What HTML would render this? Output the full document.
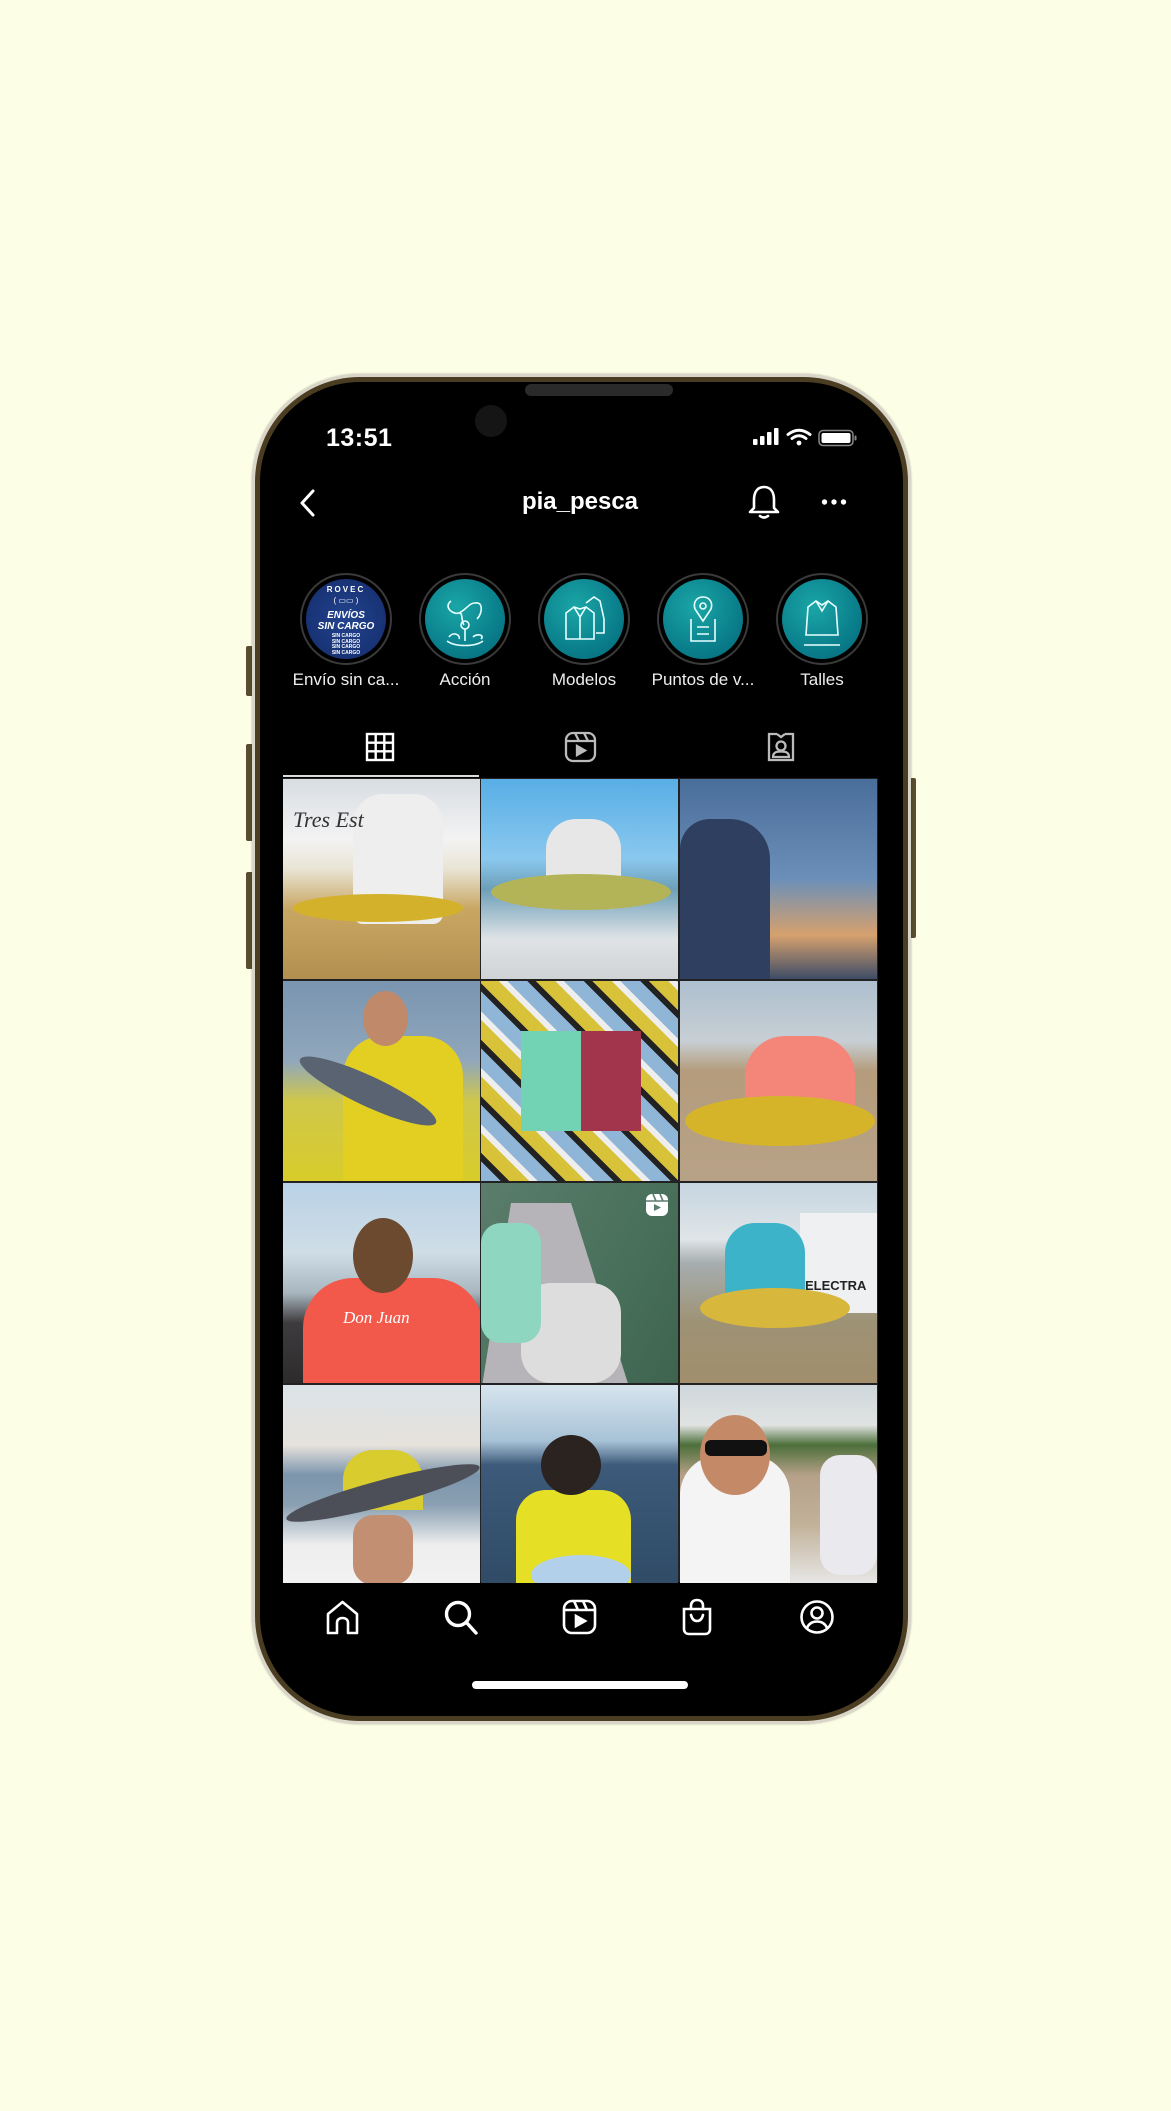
<!DOCTYPE html>
<html><head><meta charset="utf-8"><style>
*{margin:0;padding:0;box-sizing:border-box}
html,body{width:1171px;height:2111px;background:#fdfee6;overflow:hidden;font-family:"Liberation Sans",Arial,sans-serif}
.abs{position:absolute}
.frame{left:252px;top:374px;width:659px;height:1350px;border-radius:108px;background:#d9d5c9;box-shadow:0 0 2px rgba(0,0,0,.3)}
.band{left:255px;top:377px;width:653px;height:1344px;border-radius:105px;background:#4a3d22}
.screen{left:260px;top:382px;width:643px;height:1334px;border-radius:100px;background:#000;overflow:hidden}
.btn{background:#5a4c2e;border-radius:2px}
.t{color:#fff;position:absolute}
.hl{position:absolute;top:573px;width:92px;height:92px;border-radius:50%;border:2px solid #3a3a3a;background:#000}
.hl .in{position:absolute;left:4px;top:4px;width:80px;height:80px;border-radius:50%;background:radial-gradient(circle at 40% 35%,#1aa6a6,#0a7f8c 60%,#066676);overflow:hidden}
.lab{position:absolute;top:670px;width:120px;text-align:center;color:#eee;font-size:17px}
.cell{position:absolute;width:197px;height:200px;overflow:hidden}
</style></head><body>
<div class="abs btn" style="left:246px;top:646px;width:7px;height:50px"></div>
<div class="abs btn" style="left:246px;top:744px;width:7px;height:97px"></div>
<div class="abs btn" style="left:246px;top:872px;width:7px;height:97px"></div>
<div class="abs btn" style="left:910px;top:778px;width:6px;height:160px"></div>
<div class="abs frame"></div>
<div class="abs band"></div>
<div class="abs screen"></div>
<div class="abs" style="left:525px;top:384px;width:148px;height:12px;border-radius:6px;background:#2a2a2a"></div>
<div class="abs" style="left:475px;top:405px;width:32px;height:32px;border-radius:50%;background:#151515"></div>

<div class="t" style="left:326px;top:424px;font-size:25px;font-weight:bold;letter-spacing:0.5px">13:51</div>
<svg class="abs" style="left:752px;top:426px" width="106" height="22" viewBox="0 0 106 22">
<rect x="1" y="13" width="4.5" height="6" rx="1" fill="#fff"/><rect x="8" y="10" width="4.5" height="9" rx="1" fill="#fff"/><rect x="15" y="6" width="4.5" height="13" rx="1" fill="#fff"/><rect x="22" y="2" width="4.5" height="17" rx="1" fill="#fff"/>
<path d="M36 8.5 Q47 0 58 8.5" stroke="#fff" stroke-width="3" fill="none" stroke-linecap="round"/><path d="M40 12.5 Q47 7 54 12.5" stroke="#fff" stroke-width="3" fill="none" stroke-linecap="round"/><circle cx="47" cy="17" r="2.4" fill="#fff"/>
<rect x="67" y="4.5" width="34" height="15" rx="4" fill="none" stroke="#888" stroke-width="1.5"/><rect x="69.5" y="7" width="29" height="10" rx="2" fill="#fff"/><rect x="102.5" y="9.5" width="2" height="5" rx="1" fill="#888"/>
</svg>

<svg class="abs" style="left:296px;top:488px" width="24" height="30"><path d="M17 3 L6 15 L17 27" stroke="#fff" stroke-width="3" fill="none" stroke-linecap="round" stroke-linejoin="round"/></svg>
<div class="t" style="left:480px;top:488px;width:200px;text-align:center;font-size:24px;font-weight:bold">pia_pesca</div>
<svg class="abs" style="left:748px;top:484px" width="32" height="36" viewBox="0 0 32 36"><path d="M16 3 C8 3 6 10 6 16 L6 24 L2 28 L30 28 L26 24 L26 16 C26 10 24 3 16 3 Z" stroke="#fff" stroke-width="2.6" fill="none" stroke-linejoin="round"/><path d="M12 32 Q16 35 20 32" stroke="#fff" stroke-width="2.6" fill="none" stroke-linecap="round"/></svg>
<svg class="abs" style="left:821px;top:497px" width="26" height="10"><circle cx="3.5" cy="5" r="2.7" fill="#fff"/><circle cx="13" cy="5" r="2.7" fill="#fff"/><circle cx="22.5" cy="5" r="2.7" fill="#fff"/></svg>

<div class="hl" style="left:300px"><div class="in" style="background:radial-gradient(circle at 50% 50%,#22438e,#142c6a)">
<div style="position:absolute;top:6px;width:80px;text-align:center;color:#fff;font-size:8px;font-weight:bold;letter-spacing:2px">ROVEC</div>
<div style="position:absolute;top:17px;width:80px;text-align:center;color:#fff;font-size:8px">( ▭▭ )</div>
<div style="position:absolute;top:31px;width:80px;text-align:center;color:#fff;font-size:10px;font-weight:bold;font-style:italic;line-height:11px">ENVÍOS<br>SIN CARGO</div>
<div style="position:absolute;top:55px;width:80px;text-align:center;color:#fff;font-size:5px;font-weight:bold;line-height:5.5px">SIN CARGO<br>SIN CARGO<br>SIN CARGO<br>SIN CARGO</div>
</div></div>
<div class="hl" style="left:419px"><div class="in"><svg width="80" height="80" viewBox="0 0 80 80" fill="none" stroke="#e8ffff" stroke-width="1.6"><path d="M26 22 C18 28 28 36 34 34 C38 33 36 42 39 46 M34 34 C42 30 44 24 50 24 C58 22 58 34 52 40"/><circle cx="40" cy="46" r="4"/><path d="M40 50 L40 62"/><path d="M24 58 C28 52 36 56 34 60 M22 62 C30 68 50 68 58 62 M48 58 C52 54 60 56 56 60"/></svg></div></div>
<div class="hl" style="left:538px"><div class="in"><svg width="80" height="80" viewBox="0 0 80 80" fill="none" stroke="#e8ffff" stroke-width="1.6"><path d="M22 34 L30 28 L36 30 L42 28 L50 34 L50 60 L22 60 Z"/><path d="M30 28 L36 38 L42 28 M36 38 L36 60"/><path d="M42 24 L50 18 L56 22 L60 40 L60 54 L52 54"/></svg></div></div>
<div class="hl" style="left:657px"><div class="in"><svg width="80" height="80" viewBox="0 0 80 80" fill="none" stroke="#e8ffff" stroke-width="1.6"><path d="M40 18 C33 18 30 24 32 30 L40 42 L48 30 C50 24 47 18 40 18 Z"/><circle cx="40" cy="27" r="3"/><path d="M28 40 L28 62 L52 62 L52 40 M34 48 L46 48 M34 55 L46 55"/></svg></div></div>
<div class="hl" style="left:776px"><div class="in"><svg width="80" height="80" viewBox="0 0 80 80" fill="none" stroke="#e8ffff" stroke-width="1.6"><path d="M26 28 L34 22 L40 26 L46 22 L54 28 L56 56 L24 56 Z"/><path d="M34 22 L40 32 L46 22"/><path d="M22 66 L58 66"/></svg></div></div>
<div class="lab" style="left:286px">Envío sin ca...</div>
<div class="lab" style="left:405px">Acción</div>
<div class="lab" style="left:524px">Modelos</div>
<div class="lab" style="left:643px">Puntos de v...</div>
<div class="lab" style="left:762px">Talles</div>

<svg class="abs" style="left:365px;top:732px" width="30" height="30" viewBox="0 0 30 30" fill="none" stroke="#fff" stroke-width="2.4"><rect x="2" y="2" width="26" height="26"/><path d="M10.7 2V28M19.3 2V28M2 10.7H28M2 19.3H28"/></svg>
<svg class="abs" style="left:564px;top:731px" width="33" height="32" viewBox="0 0 33 32" fill="none" stroke="#bbb" stroke-width="2.3"><rect x="2" y="2" width="29" height="28" rx="7"/><path d="M2 10H31M11 2L15 10M20 2L24 10"/><path d="M13 15L21 19.5L13 24Z" fill="#bbb"/></svg>
<svg class="abs" style="left:765px;top:731px" width="32" height="32" viewBox="0 0 32 32" fill="none" stroke="#bbb" stroke-width="2.3"><path d="M12 3H4V29H28V3H20"/><path d="M12 3L16 6L20 3"/><circle cx="16" cy="15" r="4.5"/><path d="M8 26C8 21 12 20.5 16 20.5S24 21 24 26Z"/></svg>
<div class="abs" style="left:283px;top:775px;width:196px;height:2px;background:#ddd"></div>

<div class="abs" style="left:283px;top:778px;width:595px;height:804px;background:#222"></div>
<div class="cell" style="left:283px;top:779px;background:linear-gradient(180deg,#d8dde2 0%,#f3f3f3 30%,#e9e4d5 45%,#c9a763 65%,#b28f4e 100%)"><div class="abs" style="left:70px;top:15px;width:90px;height:130px;background:#eee;border-radius:30px 30px 10px 10px"></div><div class="abs" style="left:10px;top:115px;width:170px;height:28px;background:#d4b12a;border-radius:50%"></div><div class="t" style="left:10px;top:28px;color:#333;font-style:italic;font-family:'Liberation Serif';font-size:22px">Tres Est</div></div>
<div class="cell" style="left:481px;top:779px;background:linear-gradient(180deg,#58aee6 0%,#8ac8ee 40%,#6d9fb8 55%,#dfe3e6 80%,#cfd3d6 100%)"><div class="abs" style="left:65px;top:40px;width:75px;height:90px;background:#e7e7e7;border-radius:30px 30px 10px 10px"></div><div class="abs" style="left:10px;top:95px;width:180px;height:36px;background:#b3b458;border-radius:50%"></div></div>
<div class="cell" style="left:680px;top:779px;background:linear-gradient(180deg,#4a6e9a 0%,#6b8fb8 50%,#d6a16e 78%,#3d4c66 100%)"><div class="abs" style="left:0;top:40px;width:90px;height:160px;background:#2f3f60;border-radius:30px 40px 0 0"></div></div>
<div class="cell" style="left:283px;top:981px;background:linear-gradient(180deg,#7a95b0 0%,#90a7bc 40%,#cfc84a 60%,#d8cc2a 100%)"><div class="abs" style="left:60px;top:55px;width:120px;height:145px;background:#e3cf22;border-radius:40px 40px 0 0"></div><div class="abs" style="left:80px;top:10px;width:45px;height:55px;background:#c08a6a;border-radius:50%"></div><div class="abs" style="left:10px;top:95px;width:150px;height:30px;background:#596372;border-radius:50%;transform:rotate(25deg)"></div></div>
<div class="cell" style="left:481px;top:981px;background:repeating-linear-gradient(45deg,#8fb6d6 0 14px,#222 14px 20px,#d7c23a 20px 34px,#eee 34px 40px)"><div class="abs" style="left:40px;top:50px;width:60px;height:100px;background:#72d2b4"></div><div class="abs" style="left:100px;top:50px;width:60px;height:100px;background:#a2344c"></div></div>
<div class="cell" style="left:680px;top:981px;background:linear-gradient(180deg,#aebfcf 0%,#c7cfd4 30%,#b49c7c 45%,#b8a287 100%)"><div class="abs" style="left:65px;top:55px;width:110px;height:90px;background:#f38679;border-radius:40px 40px 10px 10px"></div><div class="abs" style="left:5px;top:115px;width:190px;height:50px;background:#d6b42a;border-radius:50%"></div></div>
<div class="cell" style="left:283px;top:1183px;background:linear-gradient(180deg,#b9d2e6 0%,#cfdde6 35%,#a8b6bf 55%,#3d3b3d 70%,#2d2b2c 100%)"><div class="abs" style="left:20px;top:95px;width:180px;height:110px;background:#f2594a;border-radius:50px 50px 0 0"></div><div class="abs" style="left:70px;top:35px;width:60px;height:75px;background:#6b4a30;border-radius:50%"></div><div class="t" style="left:60px;top:125px;font-style:italic;font-family:'Liberation Serif';font-size:17px">Don Juan</div></div>
<div class="cell" style="left:481px;top:1183px;background:linear-gradient(120deg,#5b7d6c 0%,#48705a 60%,#3e6450 100%)"><div class="abs" style="left:0;top:20px;width:150px;height:190px;background:#b6b4b8;clip-path:polygon(20% 0,60% 0,100% 100%,0 100%)"></div><div class="abs" style="left:40px;top:100px;width:100px;height:100px;background:#ddd;border-radius:30px"></div><div class="abs" style="left:0;top:40px;width:60px;height:120px;background:#8fd6c0;border-radius:20px"></div><svg class="abs" style="left:164px;top:10px" width="24" height="24" viewBox="0 0 24 24"><rect x="1" y="1" width="22" height="22" rx="6" fill="#fff"/><path d="M1 8H23M8 1L11 8M15 1L18 8" stroke="#5b7d6c" stroke-width="1.6"/><path d="M9 11L16 14.5L9 18Z" fill="#5b7d6c"/></svg></div>
<div class="cell" style="left:680px;top:1183px;background:linear-gradient(180deg,#c6d5e0 0%,#dfe5e8 28%,#a6aeaf 40%,#9e9275 70%,#a08e6c 100%)"><div class="abs" style="left:120px;top:30px;width:77px;height:100px;background:#eef0f2"></div><div class="abs" style="left:45px;top:40px;width:80px;height:80px;background:#3db3c9;border-radius:30px 30px 10px 10px"></div><div class="abs" style="left:20px;top:105px;width:150px;height:40px;background:#d8b83c;border-radius:50%"></div><div class="t" style="left:125px;top:95px;color:#222;font-size:13px;font-weight:bold">ELECTRA</div></div>
<div class="cell" style="left:283px;top:1385px;background:linear-gradient(180deg,#dbe3e8 0%,#e6e2dc 30%,#7c95ac 45%,#8aa0b2 60%,#eeeeee 80%,#f2f2f2 100%)"><div class="abs" style="left:60px;top:65px;width:80px;height:60px;background:#d8cc2e;border-radius:30px 30px 0 0"></div><div class="abs" style="left:0;top:95px;width:200px;height:26px;background:#4c4f58;border-radius:50%;transform:rotate(-15deg)"></div><div class="abs" style="left:70px;top:130px;width:60px;height:70px;background:#c28f73;border-radius:20px"></div></div>
<div class="cell" style="left:481px;top:1385px;background:linear-gradient(180deg,#d7e5ee 0%,#a7c2d6 28%,#3d5a7a 40%,#2f4b66 100%)"><div class="abs" style="left:35px;top:105px;width:115px;height:95px;background:#e5df26;border-radius:30px 30px 0 0"></div><div class="abs" style="left:60px;top:50px;width:60px;height:60px;background:#2a2320;border-radius:50%"></div><div class="abs" style="left:50px;top:170px;width:100px;height:40px;background:#b3d0ea;border-radius:50%"></div></div>
<div class="cell" style="left:680px;top:1385px;background:linear-gradient(180deg,#cfd7dc 0%,#e0e3e2 20%,#4c6f3a 30%,#b5a088 45%,#c2b29a 70%,#e8e8e8 100%)"><div class="abs" style="left:0;top:70px;width:110px;height:130px;background:#f4f4f4;border-radius:40px 40px 0 0"></div><div class="abs" style="left:20px;top:30px;width:70px;height:80px;background:#c48a67;border-radius:50%"></div><div class="abs" style="left:25px;top:55px;width:62px;height:16px;background:#111;border-radius:6px"></div><div class="abs" style="left:140px;top:70px;width:57px;height:120px;background:#e9e9ee;border-radius:20px"></div></div>

<div class="abs" style="left:260px;top:1583px;width:643px;height:20px;background:#000"></div>
<svg class="abs" style="left:325px;top:1600px" width="35" height="36" viewBox="0 0 35 36" fill="none" stroke="#fff" stroke-width="2.6" stroke-linejoin="round"><path d="M3 33V14L17.5 2L32 14V33H23V23C23 20 21 18 17.5 18S12 20 12 23V33Z"/></svg>
<svg class="abs" style="left:443px;top:1599px" width="36" height="38" viewBox="0 0 36 38" fill="none" stroke="#fff" stroke-width="3.4" stroke-linecap="round"><circle cx="15" cy="15" r="11.5"/><path d="M23.5 23.5L33 34"/></svg>
<svg class="abs" style="left:562px;top:1599px" width="35" height="36" viewBox="0 0 35 36" fill="none" stroke="#fff" stroke-width="2.6"><rect x="2" y="2" width="31" height="32" rx="8"/><path d="M2 11H33M12 2L16 11M21 2L25 11"/><path d="M14 17L23 22L14 27Z" fill="#fff"/></svg>
<svg class="abs" style="left:681px;top:1597px" width="32" height="40" viewBox="0 0 32 40" fill="none" stroke="#fff" stroke-width="2.6" stroke-linecap="round"><path d="M3 12H29V32C29 35 27 37 24 37H8C5 37 3 35 3 32Z"/><path d="M10 12V9C10 5 12.5 3 16 3S22 5 22 9V12"/><path d="M10 18C11 22 13 24 16 24S21 22 22 18"/></svg>
<svg class="abs" style="left:799px;top:1599px" width="36" height="36" viewBox="0 0 36 36" fill="none" stroke="#fff" stroke-width="2.6"><circle cx="18" cy="18" r="15.5"/><circle cx="18" cy="14" r="5.5"/><path d="M8 29C10 24 13.5 22.5 18 22.5S26 24 28 29"/></svg>
<div class="abs" style="left:472px;top:1681px;width:216px;height:8px;border-radius:4px;background:#fff"></div>
</body></html>
